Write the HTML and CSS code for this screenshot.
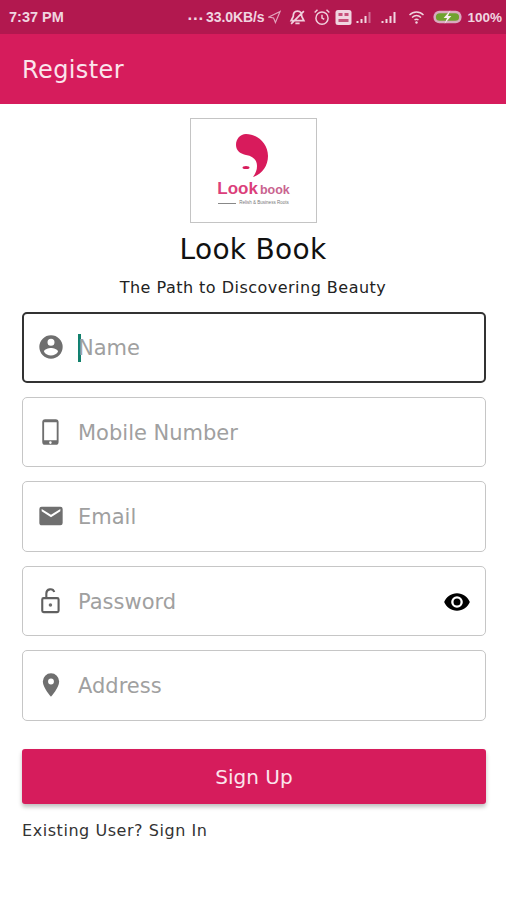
FILE: index.html
```html
<!DOCTYPE html>
<html lang="en">
<head>
  <meta charset="UTF-8">
  <title>Register</title>
  <link rel="stylesheet" href="styles.css">
</head>
<body>
  <div class="status-bar">
    <span class="status-time">7:37 PM</span>
    <div class="status-right">
      <span class="status-dots">...</span>
      <span class="status-speed">33.0KB/s</span>
      <svg class="st-nav" viewBox="0 0 14 14"><path d="M13 1 1 7l5 1 2 5z" fill="none" stroke="#e3a5bd" stroke-width="1.2"/></svg>
      <svg class="st-bell" viewBox="0 0 16 16"><path d="M8 2c-3 0-4 2-4 5l-2 4h12l-2-4c0-3-1-5-4-5zM6 13.500h4M2 14 14 2" fill="none" stroke="#f0cfdc" stroke-width="1.6"/></svg>
      <svg class="st-alarm" viewBox="0 0 16 16"><circle cx="8" cy="9" r="5.400" fill="none" stroke="#f0cfdc" stroke-width="1.300"/><path d="M8 6v3l2 1M1.500 4 4 1.500M14.500 4 12 1.500" fill="none" stroke="#f0cfdc" stroke-width="1.300"/></svg>
      <svg class="st-sim" viewBox="0 0 16 15"><rect width="16" height="15" rx="2.500" fill="#f0d5e0"/><path d="M3 3h4v3H3zM9 3h4v3H9zM3 9h10v3H3z" fill="#b5174f" opacity=".7"/></svg>
      <svg class="st-signal" viewBox="0 0 16 14"><path d="M1 11h2v2H1zM5 9h2v4H5zM9 6h2v7H9z" fill="#f0d5e0"/><path d="M13 2h2v11h-2z" fill="#cf6b92"/></svg>
      <svg class="st-signal" viewBox="0 0 16 14"><path d="M1 11h2v2H1zM5 9h2v4H5zM9 6h2v7H9zM13 2h2v11h-2z" fill="#f0d5e0"/></svg>
      <svg class="st-wifi" viewBox="0 0 16 14"><path d="M1 5c4-4 10-4 14 0M3.500 7.500c2.800-2.500 6.200-2.500 9 0M6 10c1.200-1 2.800-1 4 0" fill="none" stroke="#f0d5e0" stroke-width="1.400"/><circle cx="8" cy="12.500" r="1.200" fill="#f0d5e0"/></svg>
      <svg class="st-battery" viewBox="0 0 30 14"><rect x=".5" y=".5" width="29" height="13" rx="6" fill="#d9a9be"/><rect x="3" y="3" width="24" height="8" rx="4" fill="#6fa32f"/><path d="M18 0l-7 8h3.500L12 14l7-8h-3.500z" fill="#f8eef2"/></svg>
      <span class="status-battery">100%</span>
    </div>
  </div>

  <header class="app-bar">Register</header>

  <main class="register">
    <div class="logo-box">
      <svg class="logo-mark" viewBox="0 0 34 44">
        <path d="M10 0C4 0 0 5 0 11c0 6 5 9 10 10 7 1 11 5 11 11 0 5-2 8-4 11 9-3 15-11 15-21C32 10 22 0 10 0z" fill="#d81b5c"/>
        <ellipse cx="10" cy="33.500" rx="3.500" ry="1.600" fill="#d81b5c"/>
      </svg>
      <div class="logo-name"><b>Look</b><span>book</span></div>
      <div class="logo-tag"><i></i><span>Relish &amp; Business Roots</span></div>
    </div>
    <h1 class="brand">Look Book</h1>
    <p class="tagline">The Path to Discovering Beauty</p>

    <form class="fields">
      <div class="field field-focus">
        <svg class="field-icon" viewBox="0 0 24 24"><path d="M12 2a10 10 0 1 0 0 20 10 10 0 0 0 0-20zm0 3a3 3 0 1 1 0 6 3 3 0 0 1 0-6zm0 14.200a7.200 7.200 0 0 1-6-3.220c.03-2 4-3.080 6-3.080s5.970 1.090 6 3.080a7.200 7.200 0 0 1-6 3.220z"/></svg>
        <span class="caret"></span>
        <span class="placeholder placeholder-focus">Name</span>
      </div>
      <div class="field">
        <svg class="field-icon" viewBox="0 0 24 24"><path fill-rule="evenodd" d="M7 1h9a2.500 2.500 0 0 1 2.500 2.500v17A2.500 2.500 0 0 1 16 23H7a2.500 2.500 0 0 1-2.500-2.500v-17A2.500 2.500 0 0 1 7 1zm-.9 2.600V19h10.800V3.600zM11.500 20a1.100 1.100 0 1 0 0 2.200 1.100 1.100 0 0 0 0-2.200z"/></svg>
        <span class="placeholder">Mobile Number</span>
      </div>
      <div class="field">
        <svg class="field-icon" viewBox="0 0 24 24"><path d="M20 4H4a2 2 0 0 0-2 2v12c0 1.100.9 2 2 2h16a2 2 0 0 0 2-2V6a2 2 0 0 0-2-2zm0 4-8 5-8-5V6l8 5 8-5z"/></svg>
        <span class="placeholder">Email</span>
      </div>
      <div class="field">
        <svg class="field-icon lock-icon" viewBox="0 0 24 24"><path d="M5.700 9.500h11.600c.7 0 1.200.5 1.200 1.200v9.600c0 .7-.5 1.200-1.200 1.200H5.700c-.7 0-1.200-.5-1.200-1.200v-9.600c0-.7.5-1.200 1.200-1.200zM8 9.500V5.500a3.500 3.500 0 0 1 6.800-1.200"/><circle cx="11.500" cy="15.500" r="1.500"/></svg>
        <span class="placeholder">Password</span>
        <svg class="eye-icon" viewBox="0 0 24 24"><path d="M12 4.500C7 4.500 2.730 7.610 1 12c1.730 4.390 6 7.500 11 7.500s9.270-3.110 11-7.500c-1.730-4.390-6-7.500-11-7.500zM12 17a5 5 0 1 1 0-10 5 5 0 0 1 0 10zm0-8a3 3 0 1 0 0 6 3 3 0 0 0 0-6z"/></svg>
      </div>
      <div class="field">
        <svg class="field-icon" viewBox="0 0 24 24"><path d="M12 2a7 7 0 0 0-7 7c0 5.250 7 13 7 13s7-7.750 7-13a7 7 0 0 0-7-7zm0 9.500a2.500 2.500 0 1 1 0-5 2.500 2.500 0 0 1 0 5z"/></svg>
        <span class="placeholder">Address</span>
      </div>
    </form>

    <button class="signup" type="button">Sign Up</button>
    <p class="signin">Existing User? Sign In</p>
  </main>
</body>
</html>
```

FILE: styles.css
```css
* {
  margin: 0;
  padding: 0;
  box-sizing: border-box;
}

body {
  font-family: 'DejaVu Sans', sans-serif;
  background: #fff;
  color: #000;
  overflow: hidden;
}

/* Status bar */
.status-bar {
  height: 34px;
  background: #b2184f;
  color: #f0d5e0;
  display: flex;
  align-items: center;
  justify-content: space-between;
  padding: 0 4px 0 9px;
  font-family: 'Liberation Sans', sans-serif;
  font-size: 14.500px;
  font-weight: 700;
}

.status-right {
  display: flex;
  align-items: center;
}

.status-dots {
  font-size: 17px;
  margin-top: -5px;
  margin-right: 2px;
  letter-spacing: 0.800px;
}

.status-speed {
  font-size: 14px;
  letter-spacing: -0.100px;
}

.status-right svg {
  display: block;
}

.st-nav { width: 13px; height: 14px; margin-left: 4px; }
.st-bell { width: 17px; height: 17px; margin-left: 8px; }
.st-alarm { width: 18px; height: 18px; margin-left: 7px; }
.st-sim { width: 17px; height: 15px; margin-left: 4px; }
.st-signal { width: 19px; height: 14px; margin-left: 2px; }
.st-signal + .st-signal { margin-left: 6px; }
.st-wifi { width: 17px; height: 14px; margin-left: 10px; }
.st-battery { width: 29px; height: 14px; margin-left: 8px; }

.status-battery {
  margin-left: 5px;
  font-size: 13.500px;
}

/* App bar */
.app-bar {
  height: 70px;
  background: #d61c5c;
  color: #fbe4ec;
  font-size: 24px;
  letter-spacing: 0.400px;
  line-height: 72px;
  padding-left: 22px;
}

/* Content */
.register {
  display: flex;
  flex-direction: column;
  padding: 14px 20px 0 22px;
}

.logo-box {
  width: 127px;
  height: 105px;
  margin: 0 auto;
  position: relative;
  left: -0.500px;
  border: 1px solid #c4c4c4;
  display: flex;
  flex-direction: column;
  align-items: center;
  padding-top: 15px;
}

.logo-mark {
  width: 34px;
  height: 44px;
  margin-left: -1px;
}

.logo-name {
  display: flex;
  align-items: baseline;
  font-family: 'Liberation Sans', sans-serif;
  margin-top: 3px;
  line-height: 16px;
}

.logo-name b {
  font-size: 17px;
  color: #dc3f7b;
}

.logo-name span {
  font-size: 12.500px;
  font-weight: 700;
  margin-left: 2px;
  color: #c9648f;
}

.logo-tag {
  display: flex;
  align-items: center;
  gap: 3px;
  margin-top: 2px;
  font-family: 'Liberation Sans', sans-serif;
  font-size: 4.500px;
  color: #777;
  line-height: 6px;
}

.logo-tag i {
  display: block;
  width: 18px;
  height: 1px;
  background: #888;
}

.brand {
  font-size: 28px;
  font-weight: 400;
  letter-spacing: 0.300px;
  text-align: center;
  line-height: 32px;
  margin-top: 11px;
  margin-right: 2px;
  color: #111;
}

.tagline {
  font-size: 16px;
  letter-spacing: 0.480px;
  text-align: center;
  line-height: 20px;
  margin-top: 12px;
  margin-right: 2px;
  color: #222;
}

.fields {
  display: flex;
  flex-direction: column;
  gap: 14px;
  margin-top: 14px;
}

.field {
  height: 70.500px;
  border: 1.500px solid #c6c6c6;
  border-radius: 5px;
  display: flex;
  align-items: center;
  padding: 0 14px 0 14px;
}

.field-focus {
  border: 2px solid #333;
}

.field-icon {
  width: 28px;
  height: 28px;
  fill: #6f6f6f;
  flex: none;
}

.lock-icon path {
  fill: none;
  stroke: #606060;
  stroke-width: 1.800;
}

.field-focus .field-icon {
  margin-left: -1px;
}

.caret {
  width: 3px;
  height: 28px;
  background: #12806c;
  margin: 2px 0 0 13px;
  flex: none;
}

.placeholder {
  font-size: 21px;
  color: #a0a0a0;
  margin: 2px 0 0 13px;
}

.placeholder-focus {
  margin-left: -3px;
}

.eye-icon {
  width: 28px;
  height: 28px;
  fill: #000;
  margin: 2px 0 0 auto;
}

.signup {
  height: 55px;
  margin-top: 28px;
  padding-top: 2px;
  border: 0;
  border-radius: 3px;
  background: #d61c5c;
  color: #fbe4ec;
  font-family: inherit;
  font-size: 20px;
  box-shadow: 0 3px 4px rgba(0,0,0,0.25);
}

.signin {
  font-size: 16px;
  letter-spacing: 0.550px;
  line-height: 20px;
  margin-top: 17px;
  color: #333;
}
```
